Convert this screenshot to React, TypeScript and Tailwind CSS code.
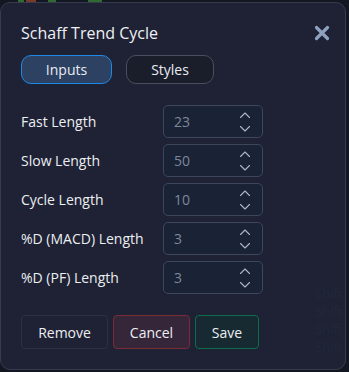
import React from 'react'

const fields = [
  { label: 'Fast Length', value: '23' },
  { label: 'Slow Length', value: '50' },
  { label: 'Cycle Length', value: '10' },
  { label: '%D (MACD) Length', value: '3' },
  { label: '%D (PF) Length', value: '3' },
]

function Stepper() {
  return (
    <svg width="12" height="24" viewBox="0 0 12 24" fill="none" className="text-[#aab6ca]">
      <path d="M1.5 7.5 L6 3 L10.5 7.5" stroke="currentColor" strokeWidth="1.1" strokeLinecap="round" strokeLinejoin="round" />
      <path d="M1.5 16.5 L6 21 L10.5 16.5" stroke="currentColor" strokeWidth="1.1" strokeLinecap="round" strokeLinejoin="round" />
    </svg>
  )
}

export default function App() {
  return (
    <div
      className="relative h-[372px] w-[349px] overflow-hidden bg-[#131722]"
      style={{ fontFamily: '"Open Sans", "Noto Sans", sans-serif' }}
    >
      {/* chart peeking out behind the dialog */}
      <div className="absolute left-[18px] top-0 h-[3px] w-[6px] bg-[#2f6b2f]" />
      <div className="absolute left-[26px] top-0 h-[3px] w-[10px] bg-[#7a3a2a]" />
      <div className="absolute left-[48px] top-0 h-[3px] w-[8px] bg-[#2f6b2f]" />
      <div className="absolute left-[88px] top-0 h-[3px] w-[14px] bg-[#2f6b2f]" />
      <div className="absolute left-[315px] top-[284px] flex flex-col text-[13px] leading-[18px] text-[#4a5062]">
        <span>Shift</span>
        <span>Shift</span>
        <span>Shift</span>
        <span>Shift</span>
      </div>

      <div className="relative mt-[2px] flex h-[368px] w-[346px] flex-col rounded-[10px] border border-[#363c4e] bg-[#1f2436]/[0.93] px-5 pt-4">
        <div className="flex h-7 items-center justify-between">
          <h2 className="text-[16px] text-[#eef0f4]">Schaff Trend Cycle</h2>
          <svg width="16" height="16" viewBox="0 0 16 16" className="mr-[-5px] mt-[-1px]">
            <path d="M2.5 2.5 L13.5 13.5 M13.5 2.5 L2.5 13.5" stroke="#8ea2c0" strokeWidth="3.2" strokeLinecap="round" />
          </svg>
        </div>

        <div className="mt-2 flex gap-[14px]">
          <button className="h-[29px] w-[91px] rounded-[10px] border border-[#1e88e5] bg-[#2d4163] text-[14px] text-[#e8ecf2]">
            Inputs
          </button>
          <button className="h-[29px] w-[88px] rounded-[10px] border border-[#4a4f5e] bg-[#1a1e2b] text-[14px] text-[#e8ecf2]">
            Styles
          </button>
        </div>

        <div className="mt-[21px] flex flex-col gap-[6px]">
          {fields.map((f) => (
            <div key={f.label} className="flex items-center">
              <span className="w-[142px] text-[14px] text-[#eceef2]">{f.label}</span>
              <div className="flex h-[33px] w-[100px] items-center justify-between rounded-[5px] border border-[#3c475d] bg-[#1a2236] pl-[10px] pr-[11px]">
                <span className="text-[14px] text-[#7c879a]">{f.value}</span>
                <Stepper />
              </div>
            </div>
          ))}
        </div>

        <div className="mt-[21px] flex gap-[5px]">
          <button className="h-[34px] w-[87px] rounded-[4px] border border-[#2c3142] text-[14px] text-[#eceef2]">
            Remove
          </button>
          <button className="h-[34px] w-[77px] rounded-[4px] border border-[#7a2c36] bg-[#35263a] text-[14px] text-[#eceef2]">
            Cancel
          </button>
          <button className="h-[34px] w-[64px] rounded-[4px] border border-[#0e6b4c] bg-[#172a31] text-[14px] text-[#eceef2]">
            Save
          </button>
        </div>
      </div>
    </div>
  )
}
